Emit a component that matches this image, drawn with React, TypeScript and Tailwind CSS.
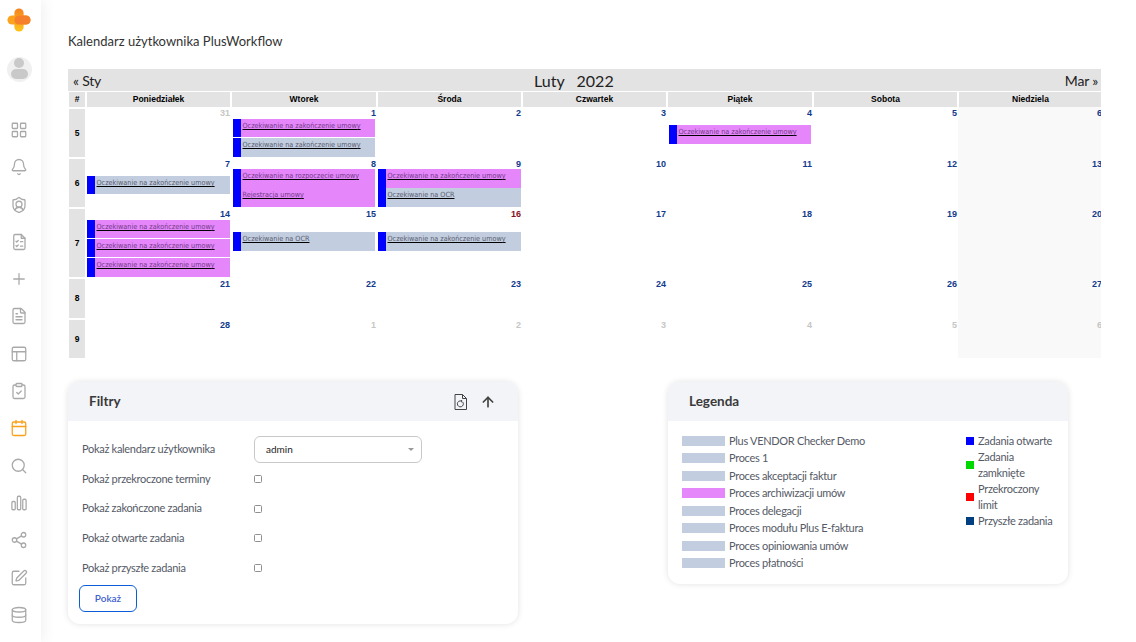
import {
  ArrowUp,
  Bell,
  Calendar,
  ClipboardCheck,
  Database,
  FileText,
  LayoutGrid,
  PanelsTopLeft,
  Plus,
  Search,
  Share2,
  ShieldUser,
  SquarePen,
} from "lucide-react";

function FileListIcon({ size, strokeWidth, className }: { size: number; strokeWidth: number; className: string }) {
  return (
    <svg width={size} height={size} viewBox="0 0 24 24" fill="none" stroke="currentColor" strokeWidth={strokeWidth} strokeLinecap="round" strokeLinejoin="round" className={className}>
      <path d="M5 4a2 2 0 0 1 2-2h8l5 5v13a2 2 0 0 1-2 2H7a2 2 0 0 1-2-2z" />
      <path d="M15 2v5h5" />
      <path d="M8 11l1 1 2-2" />
      <path d="M14 11.500h3" />
      <path d="M8 17l1 1 2-2" />
      <path d="M14 17.500h3" />
    </svg>
  );
}

function BarsIcon({ size, strokeWidth, className }: { size: number; strokeWidth: number; className: string }) {
  return (
    <svg width={size} height={size} viewBox="0 0 24 24" fill="none" stroke="currentColor" strokeWidth={strokeWidth} strokeLinejoin="round" className={className}>
      <rect x="2.500" y="10" width="4.500" height="11" rx="1.500" />
      <rect x="9.800" y="3" width="4.500" height="18" rx="1.500" />
      <rect x="17" y="7" width="4.500" height="14" rx="1.500" />
    </svg>
  );
}

const navIcons = [
  { icon: LayoutGrid },
  { icon: Bell },
  { icon: ShieldUser },
  { icon: FileListIcon },
  { icon: Plus },
  { icon: FileText },
  { icon: PanelsTopLeft },
  { icon: ClipboardCheck },
  { icon: Calendar, active: true },
  { icon: Search },
  { icon: BarsIcon },
  { icon: Share2 },
  { icon: SquarePen },
  { icon: Database },
];

const weekDays = ["Poniedziałek", "Wtorek", "Środa", "Czwartek", "Piątek", "Sobota", "Niedziela"];

const insets = ["mx-px", "mx-[2px]", "mx-px", "mx-px", "mx-[2px]", "mx-px", "mx-px"];

const rows = [
  { week: 5, height: "h-[51px]", cell: "mt-[2px] mb-px", days: [31, 1, 2, 3, 4, 5, 6], muted: [0] },
  { week: 6, height: "h-[50px]", cell: "my-px", days: [7, 8, 9, 10, 11, 12, 13], muted: [] },
  { week: 7, height: "h-[70px]", cell: "my-px", days: [14, 15, 16, 17, 18, 19, 20], muted: [] },
  { week: 8, height: "h-[41px]", cell: "my-px", days: [21, 22, 23, 24, 25, 26, 27], muted: [] },
  { week: 9, height: "h-[39px]", cell: "mt-px", days: [28, 1, 2, 3, 4, 5, 6], muted: [1, 2, 3, 4, 5, 6] },
];

const WAIT_END = "Oczekiwanie na zakończenie umowy";

type TEvent = { label: string; pink?: boolean; height: string; gap?: boolean };
type TCellEvents = { offset: string; events: TEvent[] };

const cellEvents: Record<string, TCellEvents> = {
  "5-1": {
    offset: "mt-px",
    events: [
      { label: WAIT_END, pink: true, height: "h-[18px]" },
      { label: WAIT_END, height: "h-[19px]", gap: true },
    ],
  },
  "5-4": { offset: "mt-[7px]", events: [{ label: WAIT_END, pink: true, height: "h-[19px]" }] },
  "6-0": { offset: "mt-[7px]", events: [{ label: WAIT_END, height: "h-[18px]" }] },
  "6-1": {
    offset: "mt-0",
    events: [
      { label: "Oczekiwanie na rozpoczęcie umowy", pink: true, height: "h-[19px]" },
      { label: "Rejestracja umowy", pink: true, height: "h-[19px]" },
    ],
  },
  "6-2": {
    offset: "mt-0",
    events: [
      { label: WAIT_END, pink: true, height: "h-[19px]" },
      { label: "Oczekiwanie na OCR", height: "h-[19px]" },
    ],
  },
  "7-0": {
    offset: "mt-px",
    events: [
      { label: WAIT_END, pink: true, height: "h-[18px]" },
      { label: WAIT_END, pink: true, height: "h-[18px]", gap: true },
      { label: WAIT_END, pink: true, height: "h-[19px]", gap: true },
    ],
  },
  "7-1": { offset: "mt-[13px]", events: [{ label: "Oczekiwanie na OCR", height: "h-[19px]" }] },
  "7-2": { offset: "mt-[13px]", events: [{ label: WAIT_END, height: "h-[19px]" }] },
};

const legendProcesses = [
  { name: "Plus VENDOR Checker Demo" },
  { name: "Proces 1" },
  { name: "Proces akceptacji faktur" },
  { name: "Proces archiwizacji umów", pink: true },
  { name: "Proces delegacji" },
  { name: "Proces modułu Plus E-faktura" },
  { name: "Proces opiniowania umów" },
  { name: "Proces płatności" },
];

const legendStates = [
  { lines: ["Zadania otwarte"], color: "bg-[#0000ff]" },
  { lines: ["Zadania", "zamknięte"], color: "bg-[#00d900]" },
  { lines: ["Przekroczony", "limit"], color: "bg-[#ff0000]" },
  { lines: ["Przyszłe zadania"], color: "bg-[#003f80]" },
];

const filters = [
  "Pokaż przekroczone terminy",
  "Pokaż zakończone zadania",
  "Pokaż otwarte zadania",
  "Pokaż przyszłe zadania",
];

function Logo() {
  return (
    <svg width="24" height="24" viewBox="0 0 26 26">
      <defs>
        <linearGradient id="logoV" x1="0" y1="0" x2="0" y2="1">
          <stop offset="0" stopColor="#f58220" />
          <stop offset="1" stopColor="#ffc51a" />
        </linearGradient>
      </defs>
      <rect x="8" y="0.500" width="10" height="25" rx="5" fill="url(#logoV)" />
      <rect x="0.500" y="8" width="25" height="10" rx="5" fill="#fba31c" />
      <path d="M13 8h7.500a5 5 0 0 1 0 10H13a5 5 0 0 1 0-10z" fill="#f57f2a" />
    </svg>
  );
}

function Avatar() {
  return (
    <div className="w-[25px] h-[25px] rounded-full bg-[#f0f0f0] overflow-hidden flex flex-col items-center">
      <div className="w-[10px] h-[10px] rounded-full bg-[#c9c9c9] mt-[1px] shrink-0" />
      <div className="w-[17px] h-[10px] rounded-[5px] bg-[#c9c9c9] mt-[1px] shrink-0" />
    </div>
  );
}

function Sidebar() {
  return (
    <aside className="w-[41px] h-full shrink-0 bg-white shadow-[4px_0_12px_rgba(0,0,0,0.05)] flex flex-col items-center pr-[3px] z-10">
      <div className="mt-[8px] h-[24px]">
        <Logo />
      </div>
      <div className="mt-[25px]">
        <Avatar />
      </div>
      <nav className="mt-[39px] flex flex-col items-center gap-[19.3px]">
        {navIcons.map(({ icon: Icon, active }, index) => (
          <Icon
            key={index}
            size={18}
            strokeWidth={1.7}
            className={active ? "text-[#f9a11b]" : "text-[#a9a9a9]"}
          />
        ))}
      </nav>
    </aside>
  );
}

function EventBar({ event }: { event: TEvent }) {
  return (
    <div className={`flex ${event.height} ${event.gap ? "mt-px" : ""}`}>
      <div className="w-2 shrink-0 bg-[#0000ff]" />
      <div className={`flex-1 pl-[1.5px] pt-[2px] ${event.pink ? "bg-[#e586fb] text-[#6f3a85]" : "bg-[#c3cde0] text-[#565c6c]"}`}>
        <a className="block w-fit whitespace-nowrap font-normal text-[7.2px] leading-[10px] underline decoration-black font-['DejaVu_Sans_Condensed','Liberation_Sans',sans-serif]">
          {event.label}
        </a>
      </div>
    </div>
  );
}

function CalendarTable() {
  return (
    <div className="w-[1033px] overflow-hidden">
      <div className="h-[22px] bg-[#e3e3e3] flex items-center justify-between text-[14px] tracking-[-0.2px] text-[#222] pl-[5px] pr-[3px] relative">
        <span>« Sty</span>
        <span className="absolute left-[466px] top-0 text-[16px] tracking-normal leading-[24px] whitespace-pre">Luty   2022</span>
        <span>Mar »</span>
      </div>
      <div className="grid grid-cols-[18px_145px_146px_145px_145px_146px_145px_145px] font-['Liberation_Sans',sans-serif] text-[8.5px]">
        <div className="mx-px h-[15px] mt-px bg-[#e3e3e3] flex items-center justify-center font-bold text-black">#</div>
        {weekDays.map((day) => (
          <div key={day} className="mx-px h-[15px] mt-px bg-[#e3e3e3] flex items-center justify-center font-bold text-black">
            {day}
          </div>
        ))}
        {rows.map((row) => (
          <div key={row.week} className="contents">
            <div className={`${row.height} px-px flex flex-col`}>
              <div className={`${row.cell} flex-1 bg-[#e3e3e3] flex items-center justify-center font-bold text-black`}>
                {row.week}
              </div>
            </div>
            {row.days.map((date, col) => {
              const content = cellEvents[`${row.week}-${col}`];
              return (
                <div key={col} className={`${row.height} ${col === 6 ? "bg-[#f9f9f9]" : ""}`}>
                  <div
                    className={`h-[11px] pr-px pt-px text-right font-bold leading-[10px] text-[9px] ${
                      row.muted.includes(col) ? "text-[#c6c6c6]" : date === 16 ? "text-[#8a0f1f]" : "text-[#123a8c]"
                    }`}
                  >
                    {date}
                  </div>
                  {content && (
                    <div className={`${content.offset} ${insets[col]}`}>
                      {content.events.map((event, index) => (
                        <EventBar key={index} event={event} />
                      ))}
                    </div>
                  )}
                </div>
              );
            })}
          </div>
        ))}
      </div>
    </div>
  );
}

function Panel({ title, width, height, actions, children }: { title: string; width: string; height: string; actions?: React.ReactNode; children: React.ReactNode }) {
  return (
    <section className={`${width} ${height} rounded-[12px] bg-white shadow-[0_0_6px_rgba(0,0,0,0.12)] overflow-hidden`}>
      <header className="h-[39px] bg-[#f3f4f8] flex items-center justify-between pl-[21px] pr-[22px]">
        <h2 className="text-[13.5px] font-bold text-[#3a3a3a]">{title}</h2>
        {actions}
      </header>
      {children}
    </section>
  );
}

function FiltersPanel() {
  return (
    <Panel
      title="Filtry"
      width="w-[450px]"
      height="h-[242px]"
      actions={
        <div className="flex items-center gap-[13px] text-[#444]">
          <svg width="13" height="16" viewBox="0 0 13 16" fill="none" stroke="currentColor" strokeWidth="1">
            <path d="M1 .5h7.500l4 4v11H1z" />
            <path d="M8.500 .5v4h4" />
            <path d="M8.700 8a3 3 0 1 1-1.200-.9" />
            <path d="M7 6.200l1.200 1-1.200 1" />
          </svg>
          <ArrowUp size={16} strokeWidth={2.5} />
        </div>
      }
    >
      <div className="pl-[14px] pt-[15px] text-[11px] tracking-[-0.3px] text-[#555a66]">
        <div className="flex items-center h-[27px]">
          <span className="w-[172px]">Pokaż kalendarz użytkownika</span>
          <div className="w-[168px] h-[27px] rounded-[6px] border border-[#c8c8c8] flex items-center justify-between pl-[11px] pr-[7px] text-[10px] tracking-normal text-[#222]">
            admin
            <span className="w-0 h-0 border-x-[3px] border-x-transparent border-t-[3px] border-t-[#999]" />
          </div>
        </div>
        <div className="mt-px flex flex-col">
          {filters.map((filter) => (
            <label key={filter} className="flex items-center h-[29.7px]">
              <span className="w-[172px]">{filter}</span>
              <span className="w-2 h-2 rounded-[1.5px] border border-[#8f8f8f] bg-white" />
            </label>
          ))}
        </div>
        <button
          type="button"
          className="-ml-[3px] mt-[2px] w-[58px] h-[27px] rounded-[6px] border border-[#0b5ed7] text-[10px] font-semibold tracking-normal text-[#3f5fd0]"
        >
          Pokaż
        </button>
      </div>
    </Panel>
  );
}

function LegendPanel() {
  return (
    <Panel title="Legenda" width="w-[400px]" height="h-[202px]">
      <div className="flex justify-between pl-[14px] pr-[14px] pt-[12px] text-[11px] tracking-[-0.3px] text-[#555a66]">
        <div className="-mt-px">
          {legendProcesses.map((process) => (
            <div key={process.name} className="flex items-center h-[17.5px] gap-[4px]">
              <span className={`w-[43px] h-[10px] ${process.pink ? "bg-[#e586fb]" : "bg-[#c3cde0]"}`} />
              <span>{process.name}</span>
            </div>
          ))}
        </div>
        <div className="w-[88px]">
          {legendStates.map((state) => (
            <div key={state.lines[0]} className="flex items-center gap-[4px]">
              <span className={`w-2 h-2 shrink-0 ${state.color}`} />
              <span className="leading-[16px] whitespace-nowrap">
                {state.lines.map((line) => (
                  <span key={line} className="block">
                    {line}
                  </span>
                ))}
              </span>
            </div>
          ))}
        </div>
      </div>
    </Panel>
  );
}

export default function App() {
  return (
    <div className="w-[1136px] h-[642px] overflow-hidden flex bg-white font-['Lato',sans-serif]">
      <Sidebar />
      <main className="flex-1 pl-[27px]">
        <h1 className="mt-[32px] text-[13px] leading-[18px] text-[#333]">Kalendarz użytkownika PlusWorkflow</h1>
        <div className="mt-[19px]">
          <CalendarTable />
        </div>
        <div className="mt-[24px] flex gap-[150px]">
          <FiltersPanel />
          <LegendPanel />
        </div>
      </main>
    </div>
  );
}
